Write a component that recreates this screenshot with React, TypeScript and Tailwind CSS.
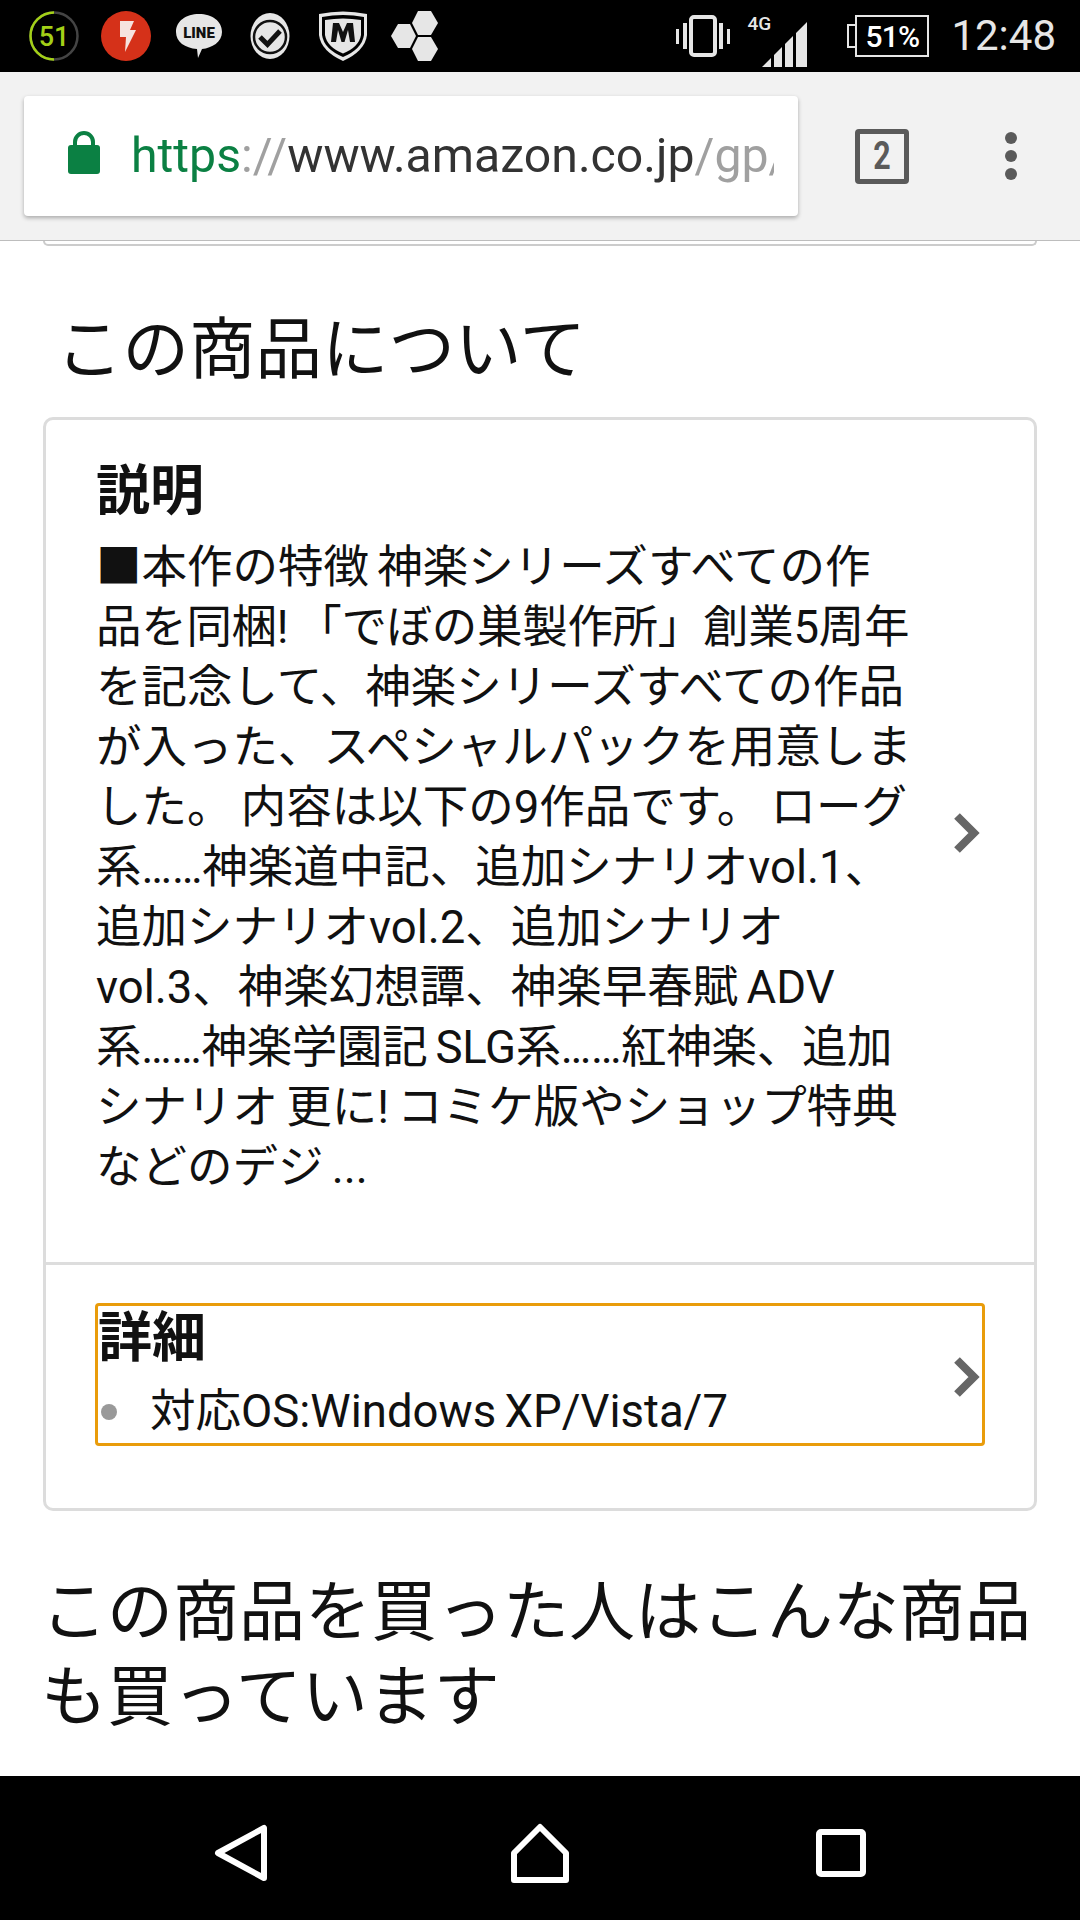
const font = 'font-["Roboto","Noto_Sans_CJK_JP",sans-serif]';

const descLines = [
  '■本作の特徴 神楽シリーズすべての作',
  '品を同梱! 「でぼの巣製作所」創業5周年',
  'を記念して、神楽シリーズすべての作品',
  'が入った、スペシャルパックを用意しま',
  'した。 内容は以下の9作品です。 ローグ',
  '系……神楽道中記、追加シナリオvol.1、',
  '追加シナリオvol.2、追加シナリオ',
  'vol.3、神楽幻想譚、神楽早春賦 ADV',
  '系……神楽学園記 SLG系……紅神楽、追加',
  'シナリオ 更に! コミケ版やショップ特典',
  'などのデジ ...',
];

// these two run a little wide compared with the rest
const tightLines = [1, 8];

function Chevron({ className = '' }: { className?: string }) {
  return (
    <svg width="30" height="40" viewBox="0 0 30 40" className={`shrink-0 ${className}`}>
      <path d="M5 3 L22 20 L5 37" fill="none" stroke="#666" strokeWidth="8" />
    </svg>
  );
}

function StatusIcons() {
  return (
    <div className="flex items-center h-full pl-[29px]">
      <svg width="50" height="52" viewBox="0 0 50 52">
        <circle cx="25" cy="26" r="23.5" fill="none" stroke="#444" strokeWidth="2.5" />
        <path d="M25 2.5 A23.5 23.5 0 0 0 25 49.5" fill="none" stroke="#a3d017" strokeWidth="2.5" />
        <text x="25" y="36" textAnchor="middle" fontSize="27" fontWeight="500" fill="#a3d017" fontFamily="Roboto">51</text>
      </svg>
      <svg width="50" height="52" viewBox="0 0 50 52" className="ml-[22px]">
        <circle cx="25" cy="26" r="25" fill="#d53119" />
        <path d="M19 11 L33 11 L29 20 L35 20 L24 42 L25 27 L19 27 Z" fill="#f6e3df" />
      </svg>
      <svg width="48" height="46" viewBox="0 0 48 46" className="ml-[24px]">
        <path d="M24 1 C37 1 47 8 47 19 C47 29 37 35 27 36 L23 45 L22 36 C10 35 1 29 1 19 C1 8 11 1 24 1 Z" fill="#e6e6e6" />
        <text x="24" y="25" textAnchor="middle" fontSize="15" fontWeight="900" fill="#111" fontFamily="Roboto">LINE</text>
      </svg>
      <svg width="40" height="46" viewBox="0 0 40 46" className="ml-[27px]">
        <ellipse cx="20" cy="23" rx="19.5" ry="23" fill="#e6e6e6" />
        <circle cx="20" cy="24" r="16" fill="#e6e6e6" stroke="#111" strokeWidth="2.5" />
        <path d="M10 24 L17.5 31.5 L30 18" fill="none" stroke="#111" strokeWidth="5" />
      </svg>
      <svg width="50" height="50" viewBox="0 0 50 50" className="ml-[28px]">
        <path d="M1 3 Q25 -2 49 3 L49 24 Q47 40 25 50 Q3 40 1 24 Z" fill="#e6e6e6" />
        <path d="M4 6 Q25 2 46 6 L46 24 Q44 38 25 46 Q6 38 4 24 Z" fill="#000" />
        <path d="M7 9 Q25 6 43 9 L43 24 Q41 36 25 42.5 Q9 36 7 24 Z" fill="#e6e6e6" />
        <path d="M13 31 L15 12 L21 12 L25 21 L29 12 L35 12 L37 31 L32 31 L30 19 L26.5 31 L23.5 31 L20 19 L18 31 Z" fill="#111" />
      </svg>
      <svg width="48" height="50" viewBox="0 0 48 50" className="ml-[23px]">
        <path d="M7 13 L19 13 L25 25 L19 37 L7 37 L0 25 Z" fill="#e6e6e6" />
        <path d="M27 0 L40 0 L47 12 L40 24 L27 24 L21 12 Z" fill="#e6e6e6" />
        <path d="M27 26 L40 26 L47 38 L40 50 L27 50 L21 38 Z" fill="#e6e6e6" />
      </svg>
    </div>
  );
}

function SystemIcons() {
  return (
    <div className="flex items-center h-full pr-[24px]">
      <svg width="54" height="42" viewBox="0 0 54 42">
        <rect x="15" y="2" width="24" height="38" rx="3" fill="none" stroke="#e6e6e6" strokeWidth="4" />
        <rect x="0" y="14" width="3" height="15" fill="#e6e6e6" />
        <rect x="7" y="8" width="4" height="26" fill="#e6e6e6" />
        <rect x="43" y="8" width="4" height="26" fill="#e6e6e6" />
        <rect x="51" y="14" width="3" height="15" fill="#e6e6e6" />
      </svg>
      <div className="relative w-[45px] h-[45px] ml-[32px] mr-[3px] mt-[16px]">
        <svg width="45" height="45" viewBox="0 0 45 45">
          <path d="M0 45 L9 36 L9 45 Z M12 33 L20 25 L20 45 L12 45 Z M23 22 L31 14 L31 45 L23 45 Z M34 11 L45 0 L45 45 L34 45 Z" fill="#e6e6e6" />
        </svg>
        <span className="absolute left-[-15px] top-[-8px] text-[19px] leading-[19px] font-medium text-[#e6e6e6]">4G</span>
      </div>
      <div className="ml-[37px] flex items-center">
        <div className="w-[8px] h-[24px] border-2 border-r-0 border-[#e6e6e6]" />
        <div className="w-[74px] h-[42px] border-2 border-[#e6e6e6] flex items-center justify-center text-[30px] font-medium text-white tracking-tight">51%</div>
      </div>
      <span className="ml-[22px] text-[42px] leading-none text-[#e6e6e6]">12:48</span>
    </div>
  );
}

function UrlBar() {
  return (
    <div className="h-[169px] bg-[#f2f2f2] border-b border-[#bdbdbd] flex items-center pl-[24px] shrink-0">
      <div className="w-[774px] h-[120px] bg-white rounded-[4px] shadow-[0_2px_4px_rgba(0,0,0,0.3)] flex items-center pl-[43px]">
        <svg width="34" height="44" viewBox="0 0 34 44" className="shrink-0 mb-[6px]">
          <path d="M8 15 V11 A9 9 0 0 1 26 11 V15" fill="none" stroke="#0b8043" strokeWidth="4" />
          <rect x="1" y="14" width="32" height="29" rx="3" fill="#0b8043" />
        </svg>
        <div className="ml-[30px] w-[643px] overflow-hidden whitespace-nowrap text-[48.2px] leading-[60px] text-[#333]">
          <span className="text-[#0b8043]">https</span>
          <span className="text-[#a0a0a0]">://</span>
          <span>www.amazon.co.jp</span>
          <span className="text-[#a0a0a0]">/gp/</span>
        </div>
      </div>
      <div className="ml-[57px] w-[54px] h-[55px] border-[5px] border-[#5a5a5a] rounded-[4px] flex items-center justify-center text-[#5a5a5a] text-[38px] font-bold leading-none">
        <span className="scale-x-[0.8]">2</span>
      </div>
      <div className="ml-[96px] flex flex-col gap-[6px]">
        <div className="w-[12px] h-[12px] rounded-full bg-[#5a5a5a]" />
        <div className="w-[12px] h-[12px] rounded-full bg-[#5a5a5a]" />
        <div className="w-[12px] h-[12px] rounded-full bg-[#5a5a5a]" />
      </div>
    </div>
  );
}

export default function App() {
  return (
    <div className={`${font} w-[1080px] h-[1920px] flex flex-col bg-white overflow-hidden`}>
      <div className="h-[72px] bg-black flex items-center justify-between shrink-0">
        <StatusIcons />
        <SystemIcons />
      </div>
      <UrlBar />

      <div className="flex-1 overflow-hidden">
        <div className="mx-[43px] w-[994px] h-[5px] border-2 border-t-0 border-[#ccc] rounded-b-[8px]" />

        <h2 className="mt-[56px] pl-[56px] text-[66.5px] leading-[96px] text-[#111] font-normal">この商品について</h2>

        <div className="mt-[19px] mx-[43px] w-[994px] border-[3px] border-[#dcdcdc] rounded-[10px]">
          <div className="h-[845px] border-b-[3px] border-[#dddddd] pl-[50px] pr-[52px] flex items-center justify-between">
            <div className="self-start w-[820px] pt-[41px]">
              <div className="text-[54px] leading-[62px] font-bold text-[#111]">説明</div>
              <div className="mt-[15px] text-[45.5px] leading-[60px] text-[#111] whitespace-nowrap [word-spacing:-3px]">
                {descLines.map((l, i) => (
                  <div key={l} className={tightLines.includes(i) ? 'tracking-[-0.3px]' : ''}>{l}</div>
                ))}
              </div>
            </div>
            <Chevron className="mb-[16px]" />
          </div>

          <div className="px-[49px] pt-[38px] pb-[62px]">
            <div className="h-[143px] border-[3px] border-[#e99c0b] rounded-[4px] flex items-center justify-between">
              <div className="w-[800px] self-start pt-[5px]">
                <div className="text-[54px] leading-[56px] font-bold text-[#111]">詳細</div>
                <div className="flex items-center text-[45.5px] leading-[58px] text-[#111] mt-[16px] [word-spacing:-3px]">
                  <span className="w-[16px] h-[16px] ml-[3px] rounded-full bg-[#999] shrink-0" />
                  <span className="ml-[33px]">対応OS:Windows XP/Vista/7</span>
                </div>
              </div>
              <Chevron className="mt-[4px]" />
            </div>
          </div>
        </div>

        <h2 className="mt-[59px] pl-[41px] text-[66px] leading-[85px] text-[#111] font-normal">
          この商品を買った人はこんな商品
          <br />
          も買っています
        </h2>
      </div>

      <div className="h-[144px] bg-black flex items-center shrink-0 pt-[10px]">
        <svg width="54" height="58" viewBox="0 0 54 58" className="ml-[214px]">
          <path d="M50 4 L50 54 L4 29 Z" fill="none" stroke="#fff" strokeWidth="6" strokeLinejoin="round" />
        </svg>
        <svg width="60" height="60" viewBox="0 0 60 60" className="ml-[242px]">
          <path d="M30 4 L56 30 L56 57 L4 57 L4 30 Z" fill="none" stroke="#fff" strokeWidth="6" strokeLinejoin="round" />
        </svg>
        <svg width="50" height="48" viewBox="0 0 50 48" className="ml-[246px]">
          <rect x="3" y="3" width="44" height="42" rx="2" fill="none" stroke="#fff" strokeWidth="6" />
        </svg>
      </div>
    </div>
  );
}
